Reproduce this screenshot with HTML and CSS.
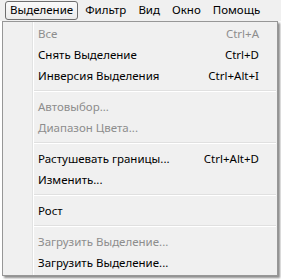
FILE: index.html
```html
<!DOCTYPE html>
<html lang="ru">
<head>
    <meta charset="UTF-8">
    <title>Выделение</title>
    <link rel="stylesheet" href="styles.css">
</head>
<body>
    <div class="menubar">
        <div class="menubar-item active">Выделение</div>
        <div class="menubar-item">Фильтр</div>
        <div class="menubar-item">Вид</div>
        <div class="menubar-item">Окно</div>
        <div class="menubar-item">Помощь</div>
    </div>

    <div class="dropdown">
        <div class="item disabled"><span class="label">Все</span><span class="shortcut">Ctrl+A</span></div>
        <div class="item"><span class="label">Снять Выделение</span><span class="shortcut">Ctrl+D</span></div>
        <div class="item"><span class="label">Инверсия Выделения</span><span class="shortcut">Ctrl+Alt+I</span></div>
        <div class="separator"></div>
        <div class="item disabled"><span class="label">Автовыбор...</span></div>
        <div class="item disabled"><span class="label">Диапазон Цвета...</span></div>
        <div class="separator"></div>
        <div class="item"><span class="label">Растушевать границы...</span><span class="shortcut">Ctrl+Alt+D</span></div>
        <div class="item"><span class="label">Изменить...</span></div>
        <div class="separator"></div>
        <div class="item"><span class="label">Рост</span></div>
        <div class="separator"></div>
        <div class="item disabled"><span class="label">Загрузить Выделение...</span></div>
        <div class="item"><span class="label">Загрузить Выделение...</span></div>
    </div>
</body>
</html>
```

FILE: styles.css
```css
body {
    margin: 0;
    background-color: #ffffff;
    font-family: 'Noto Sans', 'DejaVu Sans', sans-serif;
    font-size: 11.5px;
    color: #000;
    width: 281px;
    height: 280px;
    overflow: hidden;
}

.menubar {
    display: flex;
    height: 21px;
    padding-left: 5px;
    background-color: #f0f0f0;
    align-items: center;
}

.menubar-item {
    height: 17px;
    line-height: 16px;
    padding: 0 4px 0 4px;
    margin-right: 2px;
    border: 1px solid transparent;
    border-radius: 3px;
}

.menubar-item.active {
    border-color: #6e6e6e;
    background: linear-gradient(#fafafa, #ebebeb);
}

.dropdown {
    width: 274px;
    margin-left: 2px;
    padding: 1px 0 2px;
    border: 1px solid #979797;
    background-color: #f0f0f0;
    background-image: linear-gradient(to right, transparent 29px, #e2e3e3 29px, #e2e3e3 30px, #ffffff 30px, #ffffff 31px, transparent 31px);
    box-shadow: 2px 2px 2px rgba(0, 0, 0, 0.45);
}

.item {
    display: flex;
    height: 21px;
    align-items: center;
    padding-left: 35px;
    padding-right: 18px;
}

.label {
    flex: 1;
}

.shortcut {
    text-align: right;
}

.disabled {
    color: #8d8d8d;
}

.separator {
    height: 1px;
    margin: 4px 1px 4px 31px;
    background-color: #e0e0e0;
    border-bottom: 1px solid #ffffff;
}
```
